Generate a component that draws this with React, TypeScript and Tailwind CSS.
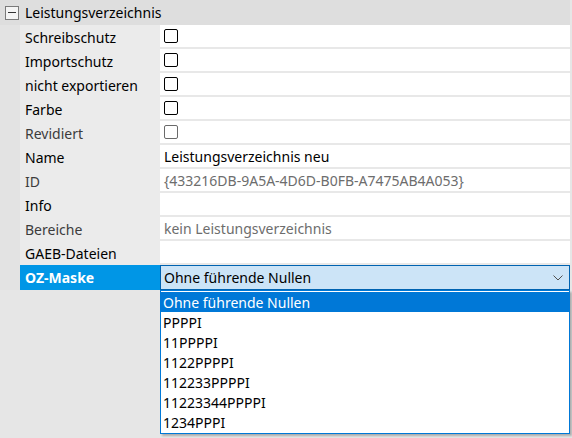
import React from "react";

type Row = { label: string; kind: "check" | "text"; value?: string; muted?: boolean };

const rows: Row[] = [
  { label: "Schreibschutz", kind: "check" },
  { label: "Importschutz", kind: "check" },
  { label: "nicht exportieren", kind: "check" },
  { label: "Farbe", kind: "check" },
  { label: "Revidiert", kind: "check", muted: true },
  { label: "Name", kind: "text", value: "Leistungsverzeichnis neu" },
  { label: "ID", kind: "text", value: "{433216DB-9A5A-4D6D-B0FB-A7475AB4A053}", muted: true },
  { label: "Info", kind: "text", value: "" },
  { label: "Bereiche", kind: "text", value: "kein Leistungsverzeichnis", muted: true },
  { label: "GAEB-Dateien", kind: "text", value: "" },
];

const options = ["Ohne führende Nullen", "PPPPI", "11PPPPI", "1122PPPPI", "112233PPPPI", "11223344PPPPI", "1234PPPI"];

export default function App() {
  return (
    <div className="relative w-[572px] h-[438px] overflow-hidden bg-[#e6e6e6] text-[14px] text-black font-['Noto_Sans',sans-serif]">
      {/* category header */}
      <div className="flex items-center h-[25px] w-[570px] bg-[#dedede]">
        <div className="ml-[5px] w-[14px] h-[14px] border border-[#7a7a7a] bg-[#f4f4f4] flex items-center justify-center">
          <div className="w-[8px] h-[1px] bg-[#333]" />
        </div>
        <span className="ml-[6px]">Leistungsverzeichnis</span>
      </div>

      <div className="flex flex-col w-[570px] pl-[20px] bg-[#e3e3e3]">
        {rows.map((r) => (
          <div key={r.label} className="flex h-[24px]">
            <div className={"w-[140px] bg-[#ebebeb] pl-[5px] flex items-center " + (r.muted ? "text-[#3c3c3c]" : "")}>
              {r.label}
            </div>
            <div className="flex-1 bg-white border-b-2 border-[#e8e8e8] flex items-center pl-[4px]">
              {r.kind === "check" ? (
                <div className={"w-[14px] h-[14px] rounded-[2px] border " + (r.muted ? "border-[#6a6a6a]" : "border-black")} />
              ) : (
                <span className={r.muted ? "text-[#6d6d6d]" : ""}>{r.value}</span>
              )}
            </div>
          </div>
        ))}
        <div className="flex h-[25px]">
          <div className="w-[140px] bg-[#0096e6] text-white font-bold pl-[5px] flex items-center">OZ-Maske</div>
          <div className="flex-1 bg-[#cce4f7] border border-[#0063b1] flex items-center justify-between pl-[3px] pr-[6px]">
            <span>Ohne führende Nullen</span>
            <svg width="10" height="6" viewBox="0 0 10 6" fill="none" stroke="#505050" strokeWidth="1">
              <path d="M0.5 0.5 L5 5 L9.5 0.5" />
            </svg>
          </div>
        </div>
      </div>

      {/* open dropdown list */}
      <div className="absolute left-[160px] top-[290px] w-[410px] h-[144px] bg-white border border-[#0078d7] shadow-[2px_2px_2px_rgba(0,0,0,0.25)] flex flex-col pt-[1px]">
        {options.map((o, i) => (
          <div
            key={o}
            className={"h-[20px] pl-[2px] flex items-center " + (i === 0 ? "bg-[#0078d7] text-white" : "")}
          >
            {o}
          </div>
        ))}
      </div>
    </div>
  );
}
